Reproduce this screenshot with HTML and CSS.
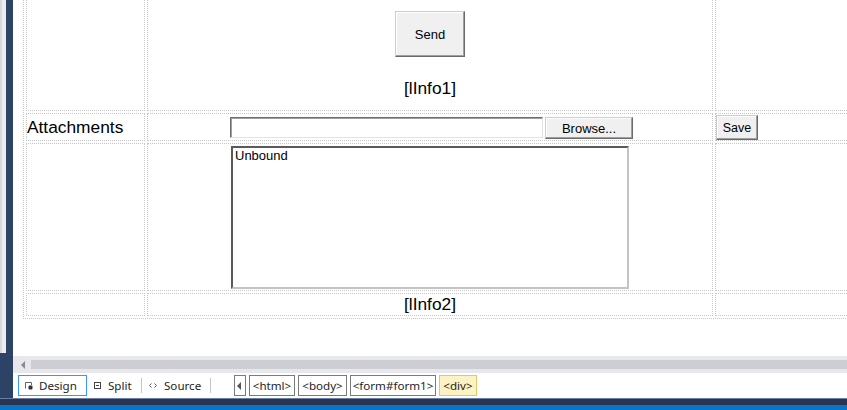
FILE: index.html
```html
<!DOCTYPE html>
<html>
<head>
<meta charset="utf-8">
<link rel="stylesheet" href="styles.css">
</head>
<body>
<div class="ide">
  <div class="side"><div class="side-panel"></div></div>
  <div class="doc">
    <div class="canvas">
      <table class="grid">
        <tr>
          <td class="c1"></td>
          <td class="c2">
            <div class="send-cell">
              <button class="btn send">Send</button>
              <span class="label info1">[lInfo1]</span>
            </div>
          </td>
          <td class="c3"></td>
        </tr>
        <tr>
          <td class="c1"><div class="attach-cell">Attachments</div></td>
          <td class="c2">
            <div class="upload">
              <input class="filebox" type="text" value="">
              <button class="btn browse">Browse...</button>
            </div>
          </td>
          <td class="c3"><div class="save-cell"><button class="btn save">Save</button></div></td>
        </tr>
        <tr>
          <td class="c1"></td>
          <td class="c2"><div class="list-cell"><div class="listbox">Unbound</div></div></td>
          <td class="c3"></td>
        </tr>
        <tr>
          <td class="c1"></td>
          <td class="c2"><div class="info2-cell">[lInfo2]</div></td>
          <td class="c3"></td>
        </tr>
      </table>
    </div>
    <div class="hscroll"><span class="hs-arrow"></span><div class="hs-thumb"></div></div>
    <div class="tabbar">
      <div class="tab tab-design">
        <svg class="ticon" width="8" height="8" viewBox="0 0 8 8"><path d="M0.5 6.5V0.5H6.5V3" fill="none" stroke="#666"/><rect x="3.5" y="3.5" width="4" height="4" rx="1" fill="#333"/></svg>
        <span>Design</span>
      </div>
      <div class="tab tab-split">
        <svg class="ticon" width="7" height="7" viewBox="0 0 7 7"><rect x="0.5" y="0.5" width="6" height="6" fill="none" stroke="#444"/><path d="M2 3.5H5" stroke="#444"/></svg>
        <span>Split</span>
      </div>
      <div class="sep"></div>
      <div class="tab tab-source">
        <svg class="ticon" width="8" height="5" viewBox="0 0 8 5"><path d="M2.5 0.5L0.5 2.5L2.5 4.5M5.5 0.5L7.5 2.5L5.5 4.5" fill="none" stroke="#555"/></svg>
        <span>Source</span>
      </div>
      <div class="sep"></div>
      <div class="nav-back"><span class="nav-tri"></span></div>
      <div class="tag tag-html">&lt;html&gt;</div>
      <div class="tag tag-body">&lt;body&gt;</div>
      <div class="tag tag-form">&lt;form#form1&gt;</div>
      <div class="tag tag-div current">&lt;div&gt;</div>
    </div>
  </div>
  <div class="navband"></div>
  <div class="statusbar"></div>
</div>
</body>
</html>
```
FILE: styles.css
```css
* { box-sizing: border-box; }
html, body { margin: 0; padding: 0; }
body {
  width: 847px;
  height: 410px;
  overflow: hidden;
  background: #2a3b5c;
  font-family: "Liberation Sans", Arial, sans-serif;
  color: #000;
}
.ide {
  display: grid;
  grid-template-columns: 13px 834px;
  grid-template-rows: 398px 7px 5px;
  width: 847px;
  height: 410px;
}
.side {
  grid-row: 1;
  grid-column: 1;
  background: #2d4366;
  display: flex;
  align-items: flex-start;
}
.side-panel {
  width: 6px;
  height: 353px;
  background: #ececf0;
  border-left: 2px solid #d6d6dc;
}
.doc {
  grid-row: 1;
  grid-column: 2;
  background: #fff;
  display: flex;
  flex-direction: column;
}
.navband {
  grid-row: 2;
  grid-column: 1 / 3;
  background: #283654;
  border-top: 1px solid #6b7ea3;
}
.statusbar {
  grid-row: 3;
  grid-column: 1 / 3;
  background: #0a74c6;
}

/* design canvas */
.canvas {
  height: 356px;
  flex: 0 0 356px;
  overflow: hidden;
}
.grid {
  margin: -20px 0 0 10px;
  border: 1px dotted #c6c6c6;
  border-collapse: separate;
  border-spacing: 2px;
  table-layout: fixed;
  width: 895px;
}
.grid td {
  padding: 0;
  border: 1px dotted #c6c6c6;
  vertical-align: top;
}
.c1 { width: 119px; }
.c2 { width: 566px; }
.c3 { width: 200px; }

.btn {
  font-family: "Liberation Sans", Arial, sans-serif;
  font-size: 13px;
  color: #000;
  background: #f0f0f0;
  border: 1px solid;
  border-color: #cdcdcd #6a6a6a #6a6a6a #cdcdcd;
  box-shadow: inset -1px -1px 0 #a0a0a0, inset 1px 1px 0 #fff;
  padding: 0;
  margin: 0;
  display: flex;
  align-items: center;
  justify-content: center;
}
.label, .attach-cell, .info2-cell {
  font-size: 17.33px;
  line-height: normal;
}

.send-cell {
  height: 126px;
  padding-top: 27px;
  display: flex;
  flex-direction: column;
  align-items: center;
}
.send { width: 70px; height: 46px; }
.info1 { margin-top: 21px; }

.attach-cell {
  height: 26px;
  display: flex;
  align-items: center;
}
.upload {
  height: 26px;
  padding-top: 3px;
  padding-left: 3px;
  display: flex;
  justify-content: center;
  align-items: flex-start;
  gap: 2px;
}
.filebox {
  width: 313px;
  height: 21px;
  margin: 0;
  padding: 0;
  border: 1px solid;
  border-color: #6d6d6d #e3e3e3 #e3e3e3 #6d6d6d;
  box-shadow: inset 1px 1px 0 #a0a0a0;
  background: #fff;
  outline: none;
}
.browse { width: 88px; height: 22px; }
.save-cell { padding-top: 1px; }
.save { width: 42px; height: 25px; font-size: 12.5px; }

.list-cell {
  height: 146px;
  padding-top: 2px;
  display: flex;
  justify-content: center;
}
.listbox {
  width: 398px;
  height: 143px;
  border: 2px solid;
  border-color: #5a5a5a #c4c4c4 #c4c4c4 #5a5a5a;
  font-size: 13px;
  padding: 0 0 0 2px;
  line-height: 15px;
  background: #fff;
}
.info2-cell {
  height: 21px;
  display: flex;
  align-items: center;
  justify-content: center;
}

/* horizontal scrollbar */
.hscroll {
  flex: 0 0 17px;
  height: 17px;
  background: #e8e8ec;
  display: flex;
  align-items: center;
}
.hs-arrow {
  margin-left: 8px;
  width: 0;
  height: 0;
  border-right: 4px solid #8a8a8e;
  border-top: 4px solid transparent;
  border-bottom: 4px solid transparent;
}
.hs-thumb {
  margin-left: 6px;
  flex: 1;
  height: 9px;
  background: #cdced3;
}

/* bottom tab bar */
.tabbar {
  flex: 0 0 25px;
  height: 25px;
  display: flex;
  align-items: center;
  padding-left: 5px;
  font-family: "Noto Sans", "Liberation Sans", sans-serif;
  font-size: 11.6px;
  color: #1e1e1e;
}
.tab {
  height: 21px;
  display: flex;
  align-items: center;
}
.ticon { flex: 0 0 auto; }
.tab-design {
  width: 69px;
  border: 1px solid #3399ff;
  padding-left: 6px;
}
.tab-design span { margin-left: 6px; }
.tab-split {
  width: 47px;
  margin-left: 7px;
}
.tab-split span { margin-left: 7px; }
.tab-source {
  width: 61px;
  margin-left: 7px;
}
.tab-source span { margin-left: 7px; }
.sep {
  width: 1px;
  height: 15px;
  background: #c6c6c6;
}
.nav-back {
  width: 12px;
  height: 21px;
  margin-left: 23px;
  border: 1px solid #7a7a7a;
  display: flex;
  align-items: center;
  padding-left: 2px;
}
.nav-tri {
  width: 0;
  height: 0;
  border-right: 4px solid #555;
  border-top: 4px solid transparent;
  border-bottom: 4px solid transparent;
}
.tag {
  height: 21px;
  margin-left: 3px;
  border: 1px solid #7a7a7a;
  display: flex;
  align-items: center;
  justify-content: center;
  white-space: nowrap;
}
.tag-html { width: 46px; }
.tag-body { width: 49px; }
.tag-form { width: 86px; }
.tag-div { width: 38px; }
.tag.current {
  background: #fdf2c4;
  border-color: #e6c46a;
}
```
